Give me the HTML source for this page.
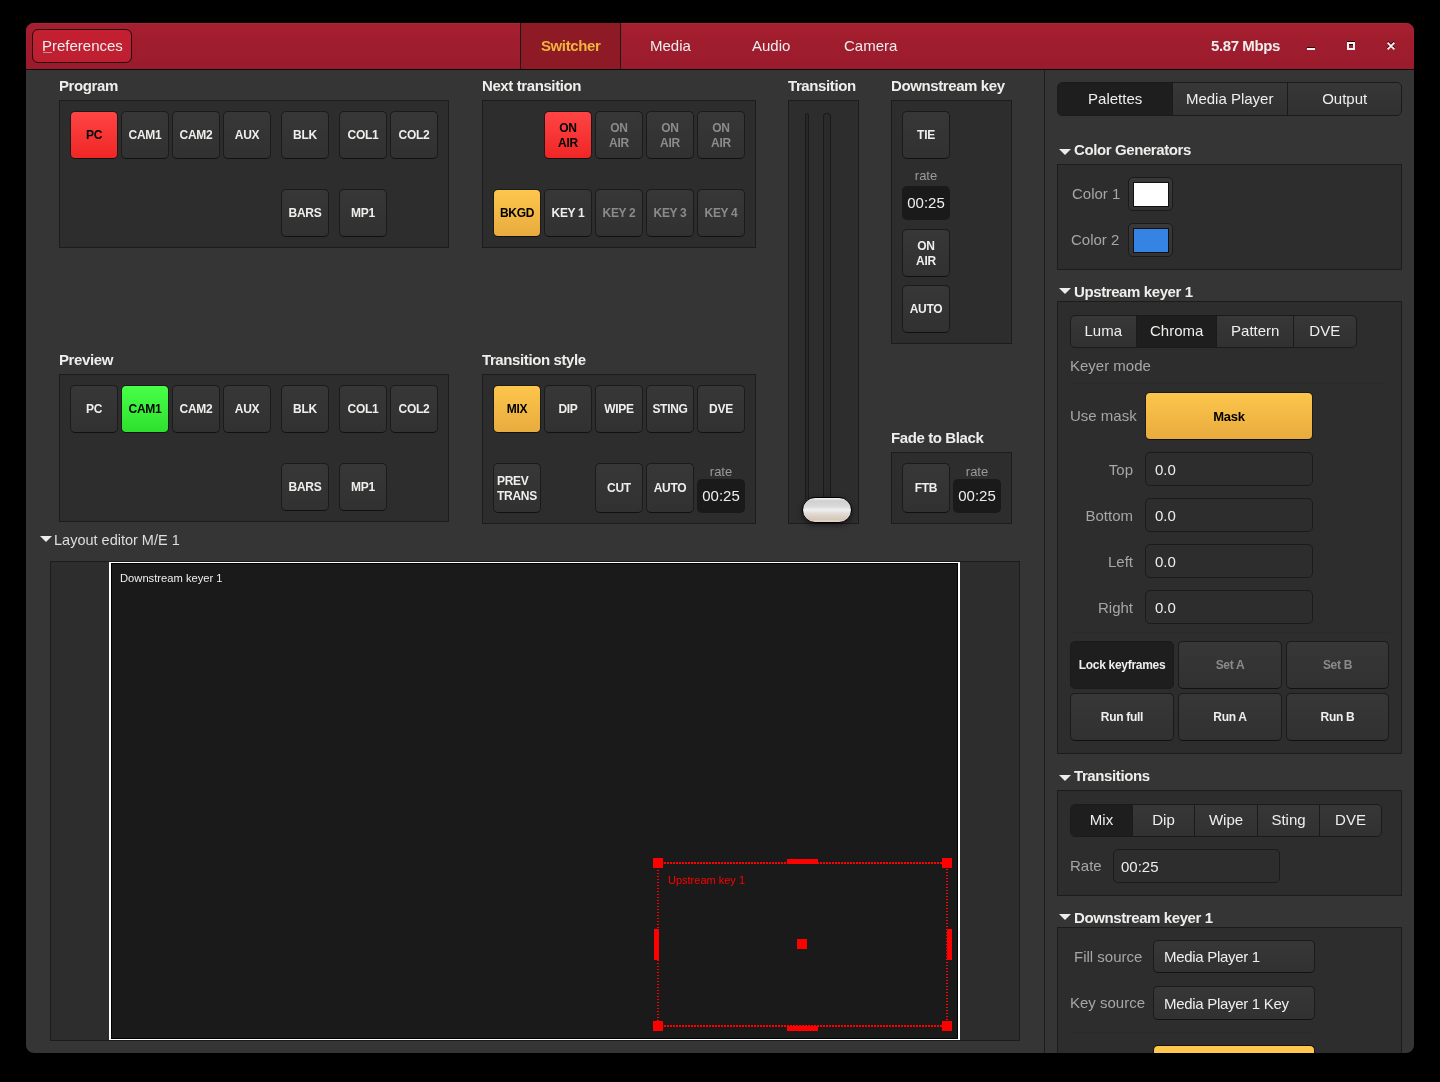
<!DOCTYPE html>
<html><head><meta charset="utf-8">
<style>
*{box-sizing:border-box;margin:0;padding:0}
html,body{width:1440px;height:1082px;background:#000;overflow:hidden;font-family:"Liberation Sans",sans-serif;color:#eeeeec}
.a{position:absolute}
.t,.b,.rl,.re,.seg div,.en,.pb{will-change:transform}
#win{left:26px;top:23px;width:1388px;height:1030px;background:#353535;border-radius:8px;overflow:hidden}
#hdr{left:26px;top:23px;width:1388px;height:47px;background:linear-gradient(#b22c3b 0,#a61f30 1px,#a01d2e 40%,#9a1b2c 100%);border-radius:8px 8px 0 0;border-bottom:1px solid #060a0a}
.t{position:absolute;white-space:nowrap;line-height:18px}
.frm{position:absolute;background:#2d2d2d;border:1px solid #1c1c1c}
.b{position:absolute;width:48px;height:48px;border:1px solid #1b1b1b;border-bottom-color:#111;border-radius:5px;background:linear-gradient(#373737,#313131);font-weight:bold;font-size:12px;letter-spacing:-0.3px;display:flex;align-items:center;justify-content:center;text-align:center;line-height:15px;color:#eeeeec}
.b.dis{color:#8b8b8b}
.b.red{background:linear-gradient(#ff4444,#f02626);color:#000}
.b.grn{background:linear-gradient(#48ff48,#2ee02e);color:#000}
.b.yel{background:linear-gradient(#fdc64c,#e8ab3e);color:#000}
.rl{position:absolute;font-size:13px;color:#9a9a9a;line-height:16px;text-align:center}
.re{position:absolute;width:48px;height:34px;background:#1a1a1a;border-radius:5px;font-size:15px;display:flex;align-items:center;justify-content:center;color:#eeeeec;padding-bottom:2px}
.tri{position:absolute;width:0;height:0;border-left:6px solid transparent;border-right:6px solid transparent;border-top:6px solid #ececec}
.seg{position:absolute;border:1px solid #1b1b1b;border-radius:5px;display:flex;overflow:hidden;background:linear-gradient(#373737,#313131)}
.seg div{display:flex;align-items:center;justify-content:center;font-size:15px;padding-bottom:2px;border-left:1px solid #1b1b1b;height:100%}
.seg div:first-child{border-left:none}
.seg div.on{background:#1e1e1e}
.en{position:absolute;background:#2d2d2d;border:1px solid #1b1b1b;border-radius:5px;font-size:15px;display:flex;align-items:center;padding-left:9px}
.pb{position:absolute;border:1px solid #1b1b1b;border-bottom-color:#111;border-radius:5px;background:linear-gradient(#373737,#313131);font-weight:bold;font-size:12px;letter-spacing:-0.3px;display:flex;align-items:center;justify-content:center}
</style></head><body>
<div id="win" class="a"></div>
<div id="hdr" class="a"></div>
<div class="a" style="left:32px;top:29px;width:100px;height:34px;border:1px solid #250a0e;border-radius:6px;background:linear-gradient(#c42032,#bd1f31)"></div>
<div class="t" style="left:42px;top:37px;font-size:15px;">Preferences</div>
<div class="a" style="left:43px;top:52px;width:9px;height:1px;background:#c09098"></div>
<div class="a" style="left:520px;top:23px;width:101px;height:46px;background:#8e1a26;border-left:1px solid #1a1a1a;border-right:1px solid #1a1a1a"></div>
<div class="t" style="left:541px;top:37px;font-size:15px;font-weight:bold;letter-spacing:-0.4px;color:#f0b53c">Switcher</div>
<div class="t" style="left:650px;top:37px;font-size:15px;">Media</div>
<div class="t" style="left:752px;top:37px;font-size:15px;">Audio</div>
<div class="t" style="left:844px;top:37px;font-size:15px;">Camera</div>
<div class="t" style="left:1211px;top:37px;font-size:15px;font-weight:bold;letter-spacing:-0.4px;">5.87 Mbps</div>
<div class="a" style="left:1307px;top:48px;width:8px;height:2px;background:#f4f4f4;box-shadow:0 -1px 0 #200808"></div>
<div class="a" style="left:1347px;top:42px;width:8px;height:8px;border:2px solid #f4f4f4;box-shadow:0 -1px 0 #200808,inset 0 1px 0 #200808"></div>
<svg class="a" style="left:1387px;top:41px" width="8" height="9" viewBox="0 0 8 9"><path d="M0.6 0.6L7.4 7.4M7.4 0.6L0.6 7.4" stroke="#200808" stroke-width="1.8"/><path d="M0.6 1.6L7.4 8.4M7.4 1.6L0.6 8.4" stroke="#f4f4f4" stroke-width="1.8"/></svg>
<div class="t" style="left:59px;top:77px;font-size:15px;font-weight:bold;letter-spacing:-0.4px;">Program</div>
<div class="frm" style="left:59px;top:100px;width:390px;height:148px"></div>
<div class="b red" style="left:70px;top:111px;width:48px;height:48px;">PC</div>
<div class="b " style="left:121px;top:111px;width:48px;height:48px;">CAM1</div>
<div class="b " style="left:172px;top:111px;width:48px;height:48px;">CAM2</div>
<div class="b " style="left:223px;top:111px;width:48px;height:48px;">AUX</div>
<div class="b " style="left:281px;top:111px;width:48px;height:48px;">BLK</div>
<div class="b " style="left:339px;top:111px;width:48px;height:48px;">COL1</div>
<div class="b " style="left:390px;top:111px;width:48px;height:48px;">COL2</div>
<div class="b " style="left:281px;top:189px;width:48px;height:48px;">BARS</div>
<div class="b " style="left:339px;top:189px;width:48px;height:48px;">MP1</div>
<div class="t" style="left:59px;top:351px;font-size:15px;font-weight:bold;letter-spacing:-0.4px;">Preview</div>
<div class="frm" style="left:59px;top:374px;width:390px;height:148px"></div>
<div class="b " style="left:70px;top:385px;width:48px;height:48px;">PC</div>
<div class="b grn" style="left:121px;top:385px;width:48px;height:48px;">CAM1</div>
<div class="b " style="left:172px;top:385px;width:48px;height:48px;">CAM2</div>
<div class="b " style="left:223px;top:385px;width:48px;height:48px;">AUX</div>
<div class="b " style="left:281px;top:385px;width:48px;height:48px;">BLK</div>
<div class="b " style="left:339px;top:385px;width:48px;height:48px;">COL1</div>
<div class="b " style="left:390px;top:385px;width:48px;height:48px;">COL2</div>
<div class="b " style="left:281px;top:463px;width:48px;height:48px;">BARS</div>
<div class="b " style="left:339px;top:463px;width:48px;height:48px;">MP1</div>
<div class="t" style="left:482px;top:77px;font-size:15px;font-weight:bold;letter-spacing:-0.4px;">Next transition</div>
<div class="frm" style="left:482px;top:100px;width:274px;height:148px"></div>
<div class="b red" style="left:544px;top:111px;width:48px;height:48px;padding-top:2px;">ON<br>AIR</div>
<div class="b dis" style="left:595px;top:111px;width:48px;height:48px;padding-top:2px;">ON<br>AIR</div>
<div class="b dis" style="left:646px;top:111px;width:48px;height:48px;padding-top:2px;">ON<br>AIR</div>
<div class="b dis" style="left:697px;top:111px;width:48px;height:48px;padding-top:2px;">ON<br>AIR</div>
<div class="b yel" style="left:493px;top:189px;width:48px;height:48px;">BKGD</div>
<div class="b " style="left:544px;top:189px;width:48px;height:48px;">KEY 1</div>
<div class="b dis" style="left:595px;top:189px;width:48px;height:48px;">KEY 2</div>
<div class="b dis" style="left:646px;top:189px;width:48px;height:48px;">KEY 3</div>
<div class="b dis" style="left:697px;top:189px;width:48px;height:48px;">KEY 4</div>
<div class="t" style="left:482px;top:351px;font-size:15px;font-weight:bold;letter-spacing:-0.4px;">Transition style</div>
<div class="frm" style="left:482px;top:374px;width:274px;height:150px"></div>
<div class="b yel" style="left:493px;top:385px;width:48px;height:48px;">MIX</div>
<div class="b " style="left:544px;top:385px;width:48px;height:48px;">DIP</div>
<div class="b " style="left:595px;top:385px;width:48px;height:48px;">WIPE</div>
<div class="b " style="left:646px;top:385px;width:48px;height:48px;">STING</div>
<div class="b " style="left:697px;top:385px;width:48px;height:48px;">DVE</div>
<div class="b " style="left:493px;top:463px;width:48px;height:50px;padding-top:2px;justify-content:flex-start;padding-left:3px;text-align:left">PREV<br>TRANS</div>
<div class="b " style="left:595px;top:463px;width:48px;height:50px;">CUT</div>
<div class="b " style="left:646px;top:463px;width:48px;height:50px;">AUTO</div>
<div class="rl" style="left:697px;top:464px;width:48px">rate</div>
<div class="re" style="left:697px;top:479px">00:25</div>
<div class="t" style="left:788px;top:77px;font-size:15px;font-weight:bold;letter-spacing:-0.4px;">Transition</div>
<div class="frm" style="left:788px;top:100px;width:71px;height:424px"></div>
<div class="a" style="left:805px;top:113px;width:4px;height:400px;background:#282828;border:1px solid #1a1a1a;border-radius:2px"></div>
<div class="a" style="left:823px;top:113px;width:8px;height:400px;background:#2a2a2a;border:1px solid #1a1a1a;border-radius:3px"></div>
<div class="a" style="left:802px;top:497px;width:50px;height:26px;border-radius:13px;border:1px solid #000;background:linear-gradient(#f4f4f4 0%,#d0d0d0 12%,#dadada 35%,#f0f0f0 50%,#e2dad4 65%,#d4c6b8 90%,#e8dccf 100%);box-shadow:0 2px 5px rgba(0,0,0,.5)"></div>
<div class="t" style="left:891px;top:77px;font-size:15px;font-weight:bold;letter-spacing:-0.4px;">Downstream key</div>
<div class="frm" style="left:891px;top:100px;width:121px;height:244px"></div>
<div class="b " style="left:902px;top:111px;width:48px;height:48px;">TIE</div>
<div class="rl" style="left:902px;top:168px;width:48px">rate</div>
<div class="re" style="left:902px;top:186px">00:25</div>
<div class="b " style="left:902px;top:229px;width:48px;height:48px;padding-top:2px;">ON<br>AIR</div>
<div class="b " style="left:902px;top:285px;width:48px;height:48px;">AUTO</div>
<div class="t" style="left:891px;top:429px;font-size:15px;font-weight:bold;letter-spacing:-0.4px;">Fade to Black</div>
<div class="frm" style="left:891px;top:452px;width:121px;height:72px"></div>
<div class="b " style="left:902px;top:463px;width:48px;height:50px;">FTB</div>
<div class="rl" style="left:953px;top:464px;width:48px">rate</div>
<div class="re" style="left:953px;top:479px">00:25</div>
<div class="tri" style="left:40px;top:536px"></div>
<div class="t" style="left:54px;top:531px;font-size:14.5px;color:#dedede">Layout editor M/E 1</div>
<div class="a" style="left:50px;top:561px;width:970px;height:480px;background:#2d2d2d;border:1px solid #1c1c1c"></div>
<div class="a" style="left:109px;top:562px;width:851px;height:478px;background:#000;border:solid #fff;border-width:1px 2px"></div>
<div class="a" style="left:112px;top:564px;width:845px;height:474px;background:#1a1a1a"></div>
<div class="t" style="left:120px;top:569px;font-size:11.2px;">Downstream keyer 1</div>
<svg class="a" style="left:640px;top:845px" width="330" height="200" viewBox="640 845 330 200"><g fill="none" stroke="#ff0000" stroke-width="2"><path stroke-dasharray="2 1" d="M664 863H942M664 1026H942"/><path stroke-dasharray="1 2" d="M658 870V1021M947 869V1021"/></g><g fill="#ff0000"><rect x="653" y="858" width="10" height="10"/><rect x="942" y="858" width="10" height="10"/><rect x="653" y="1021" width="10" height="10"/><rect x="942" y="1021" width="10" height="10"/><rect x="787" y="859" width="31" height="5"/><rect x="787" y="1026" width="31" height="5"/><rect x="654" y="929" width="5" height="31"/><rect x="947" y="929" width="5" height="31"/><rect x="797" y="939" width="10" height="10"/></g></svg>
<div class="t" style="left:668px;top:871px;font-size:11px;color:#ff0000">Upstream key 1</div>
<div class="a" style="left:1044px;top:70px;width:1px;height:983px;background:#1c1c1c"></div>
<div class="seg" style="left:1057px;top:82px;width:345px;height:34px"><div class="on" style="width:115px">Palettes</div><div style="width:115px">Media Player</div><div style="width:115px">Output</div></div>
<div class="tri" style="left:1059px;top:149px"></div>
<div class="t" style="left:1074px;top:141px;font-size:15px;font-weight:bold;letter-spacing:-0.4px;">Color Generators</div>
<div class="frm" style="left:1057px;top:164px;width:345px;height:106px"></div>
<div class="t" style="left:1072px;top:185px;font-size:15px;color:#a6a6a6">Color 1</div>
<div class="t" style="left:1071px;top:231px;font-size:15px;color:#a6a6a6">Color 2</div>
<div class="a" style="left:1128px;top:177px;width:45px;height:34px;border:1px solid #1b1b1b;border-radius:5px;background:linear-gradient(#393939,#333)"><div class="a" style="left:4px;top:4px;width:36px;height:25px;background:#fff;border:1px solid #111"></div></div>
<div class="a" style="left:1128px;top:223px;width:45px;height:34px;border:1px solid #1b1b1b;border-radius:5px;background:linear-gradient(#393939,#333)"><div class="a" style="left:4px;top:4px;width:36px;height:25px;background:#3584e4;border:1px solid #111"></div></div>
<div class="tri" style="left:1059px;top:288px"></div>
<div class="t" style="left:1074px;top:283px;font-size:15px;font-weight:bold;letter-spacing:-0.4px;">Upstream keyer 1</div>
<div class="frm" style="left:1057px;top:301px;width:345px;height:453px"></div>
<div class="seg" style="left:1070px;top:315px;width:287px;height:33px"><div style="width:65px">Luma</div><div class="on" style="width:81px">Chroma</div><div style="width:78px">Pattern</div><div style="width:63px">DVE</div></div>
<div class="t" style="left:1070px;top:357px;font-size:15px;color:#a6a6a6">Keyer mode</div>
<div class="a" style="left:1070px;top:383px;width:318px;height:1px;background:#2a2a2a"></div>
<div class="t" style="left:1070px;top:407px;font-size:15px;color:#a6a6a6">Use mask</div>
<div class="pb" style="left:1145px;top:392px;width:168px;height:48px;background:linear-gradient(#fdc64c,#e8ab3e);color:#000;font-size:13px">Mask</div>
<div class="t" style="left:1040px;width:93px;text-align:right;top:461px;font-size:15px;color:#a6a6a6">Top</div>
<div class="en" style="left:1145px;top:452px;width:168px;height:34px">0.0</div>
<div class="t" style="left:1040px;width:93px;text-align:right;top:507px;font-size:15px;color:#a6a6a6">Bottom</div>
<div class="en" style="left:1145px;top:498px;width:168px;height:34px">0.0</div>
<div class="t" style="left:1040px;width:93px;text-align:right;top:553px;font-size:15px;color:#a6a6a6">Left</div>
<div class="en" style="left:1145px;top:544px;width:168px;height:34px">0.0</div>
<div class="t" style="left:1040px;width:93px;text-align:right;top:599px;font-size:15px;color:#a6a6a6">Right</div>
<div class="en" style="left:1145px;top:590px;width:168px;height:34px">0.0</div>
<div class="a" style="left:1069px;top:632px;width:320px;height:1px;background:#2a2a2a"></div>
<div class="pb" style="left:1070px;top:641px;width:104px;height:48px;background:#1e1e1e;border-color:#1b1b1b">Lock keyframes</div>
<div class="pb" style="left:1178px;top:641px;width:104px;height:48px;color:#8b8b8b">Set A</div>
<div class="pb" style="left:1286px;top:641px;width:103px;height:48px;color:#8b8b8b">Set B</div>
<div class="pb" style="left:1070px;top:693px;width:104px;height:48px">Run full</div>
<div class="pb" style="left:1178px;top:693px;width:104px;height:48px">Run A</div>
<div class="pb" style="left:1286px;top:693px;width:103px;height:48px">Run B</div>
<div class="tri" style="left:1059px;top:775px"></div>
<div class="t" style="left:1074px;top:767px;font-size:15px;font-weight:bold;letter-spacing:-0.4px;">Transitions</div>
<div class="frm" style="left:1057px;top:790px;width:345px;height:106px"></div>
<div class="seg" style="left:1070px;top:804px;width:312px;height:33px"><div class="on" style="width:61px">Mix</div><div style="width:62px">Dip</div><div style="width:63px">Wipe</div><div style="width:62px">Sting</div><div style="width:62px">DVE</div></div>
<div class="t" style="left:1070px;top:857px;font-size:15px;color:#a6a6a6">Rate</div>
<div class="en" style="left:1113px;top:849px;width:167px;height:34px;padding-left:7px">00:25</div>
<div class="tri" style="left:1059px;top:914px"></div>
<div class="t" style="left:1074px;top:909px;font-size:15px;font-weight:bold;letter-spacing:-0.4px;">Downstream keyer 1</div>
<div class="frm" style="left:1057px;top:927px;width:345px;height:174px"></div>
<div class="t" style="left:1074px;top:948px;font-size:15px;color:#a6a6a6">Fill source</div>
<div class="t" style="left:1070px;top:994px;font-size:15px;color:#a6a6a6">Key source</div>
<div class="pb" style="left:1153px;top:940px;width:162px;height:33px;font-weight:normal;font-size:15px;justify-content:flex-start;padding-left:10px">Media Player 1</div>
<div class="pb" style="left:1153px;top:986px;width:162px;height:34px;font-weight:normal;font-size:15px;justify-content:flex-start;padding-left:10px">Media Player 1 Key</div>
<div class="a" style="left:1070px;top:1032px;width:245px;height:1px;background:#2a2a2a"></div>
<div class="a" style="left:1153px;top:1045px;width:162px;height:8px;background:#fdc64c;border:1px solid #111;border-bottom:none;border-radius:5px 5px 0 0"></div>
<div class="a" style="left:0;top:1053px;width:1440px;height:29px;background:#000"></div>
<div class="a" style="left:1414px;top:0;width:26px;height:1082px;background:#000"></div>
</body></html>
